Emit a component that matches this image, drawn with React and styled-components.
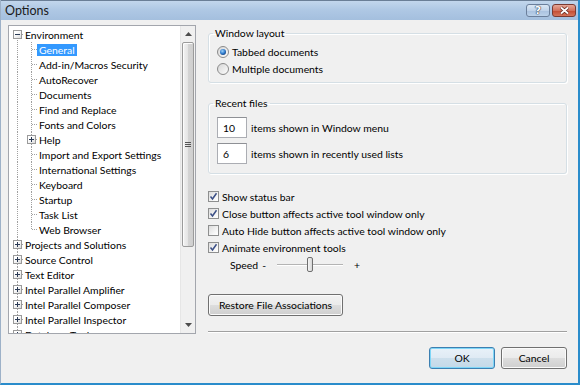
import React from 'react';
import styled, { createGlobalStyle } from 'styled-components';

const GlobalStyle = createGlobalStyle`
  html, body {
    margin: 0;
    padding: 0;
    background: #f0f0f0;
  }
  body {
    font-family: 'Lato', 'Open Sans', sans-serif;
    font-size: 10.4px;
    color: #000000;
  }
  * {
    box-sizing: border-box;
  }
`;

const TREE = [
  { label: 'Environment', level: 0, expander: 'minus' },
  { label: 'General', level: 1, selected: true },
  { label: 'Add-in/Macros Security', level: 1 },
  { label: 'AutoRecover', level: 1 },
  { label: 'Documents', level: 1 },
  { label: 'Find and Replace', level: 1 },
  { label: 'Fonts and Colors', level: 1 },
  { label: 'Help', level: 1, expander: 'plus' },
  { label: 'Import and Export Settings', level: 1 },
  { label: 'International Settings', level: 1 },
  { label: 'Keyboard', level: 1 },
  { label: 'Startup', level: 1 },
  { label: 'Task List', level: 1 },
  { label: 'Web Browser', level: 1, last: true },
  { label: 'Projects and Solutions', level: 0, expander: 'plus' },
  { label: 'Source Control', level: 0, expander: 'plus' },
  { label: 'Text Editor', level: 0, expander: 'plus' },
  { label: 'Intel Parallel Amplifier', level: 0, expander: 'plus' },
  { label: 'Intel Parallel Composer', level: 0, expander: 'plus' },
  { label: 'Intel Parallel Inspector', level: 0, expander: 'plus' },
  { label: 'Database Tools', level: 0, expander: 'plus' },
];

const CHECKS = [
  { label: 'Show status bar', checked: true },
  { label: 'Close button affects active tool window only', checked: true },
  { label: 'Auto Hide button affects active tool window only', checked: false },
  { label: 'Animate environment tools', checked: true },
];

function Expander({ type }) {
  return (
    <ExpanderBox>
      <svg width="9" height="9" viewBox="0 0 9 9">
        <path d="M2 4.5 H7" stroke="#2a3a55" strokeWidth="1" />
        {type === 'plus' && <path d="M4.5 2 V7" stroke="#2a3a55" strokeWidth="1" />}
      </svg>
    </ExpanderBox>
  );
}

function TreeRow({ item, first }) {
  return (
    <Row>
      {item.level === 1 && <Indent />}
      <Connector $first={first} $last={item.last}>
        {item.expander && <Expander type={item.expander} />}
      </Connector>
      <Label $selected={item.selected}>{item.label}</Label>
    </Row>
  );
}

function Radio({ checked }) {
  return (
    <svg width="12" height="12" viewBox="0 0 12 12">
      <defs>
        <linearGradient id="rbg" x1="0" y1="0" x2="1" y2="1">
          <stop offset="0" stopColor="#d4d4d4" />
          <stop offset="1" stopColor="#ffffff" />
        </linearGradient>
        <radialGradient id="rdot" cx="0.4" cy="0.35" r="0.7">
          <stop offset="0" stopColor="#9fd3fa" />
          <stop offset="0.6" stopColor="#2f7bcd" />
          <stop offset="1" stopColor="#173f7a" />
        </radialGradient>
      </defs>
      <circle cx="6" cy="6" r="5.5" fill="url(#rbg)" stroke="#8a8a8a" strokeWidth="1" />
      {checked && <circle cx="6" cy="6" r="3" fill="url(#rdot)" />}
    </svg>
  );
}

function Check({ checked }) {
  return (
    <CheckBox>
      {checked && (
        <svg width="9" height="9" viewBox="0 0 9 9">
          <path d="M1.5 4.5 L3.5 7 L7.5 1.2" fill="none" stroke="#3b4f86" strokeWidth="1.5" />
        </svg>
      )}
    </CheckBox>
  );
}

function ArrowUp() {
  return (
    <svg width="7" height="4" viewBox="0 0 7 4">
      <path d="M0 4 L3.5 0 L7 4 Z" fill="#4d4d4d" />
    </svg>
  );
}

function ArrowDown() {
  return (
    <svg width="7" height="4" viewBox="0 0 7 4">
      <path d="M0 0 L3.5 4 L7 0 Z" fill="#4d4d4d" />
    </svg>
  );
}

export default function App() {
  return (
    <>
      <GlobalStyle />
      <Window>
        <TitleBar>
          <Title>Options</Title>
          <CaptionButtons>
            <HelpButton>?</HelpButton>
            <CloseButton>
              <svg width="11" height="9" viewBox="0 0 11 9">
                <path d="M2 1.5 L9 7.5 M9 1.5 L2 7.5" stroke="#5a2018" strokeWidth="3.2" />
                <path d="M2 1.5 L9 7.5 M9 1.5 L2 7.5" stroke="#ffffff" strokeWidth="1.8" />
              </svg>
            </CloseButton>
          </CaptionButtons>
        </TitleBar>
        <Client>
          <Body>
            <TreeBox>
              <TreeList>
                {TREE.map((item, i) => (
                  <TreeRow key={item.label} item={item} first={i === 0} />
                ))}
              </TreeList>
              <ScrollBar>
                <ScrollButton>
                  <ArrowUp />
                </ScrollButton>
                <Track>
                  <Thumb>
                    <Grip />
                  </Thumb>
                </Track>
                <ScrollButton>
                  <ArrowDown />
                </ScrollButton>
              </ScrollBar>
            </TreeBox>

            <RightPane>
              <Group>
                <Legend>Window layout</Legend>
                <RadioList>
                  <OptionRow>
                    <Radio checked />
                    <span>Tabbed documents</span>
                  </OptionRow>
                  <OptionRow>
                    <Radio />
                    <span>Multiple documents</span>
                  </OptionRow>
                </RadioList>
              </Group>

              <Group $gap>
                <Legend>Recent files</Legend>
                <InputList>
                  <InputRow>
                    <NumberBox>10</NumberBox>
                    <span>items shown in Window menu</span>
                  </InputRow>
                  <InputRow>
                    <NumberBox>6</NumberBox>
                    <span>items shown in recently used lists</span>
                  </InputRow>
                </InputList>
              </Group>

              <CheckList>
                {CHECKS.map((c) => (
                  <CheckRow key={c.label}>
                    <Check checked={c.checked} />
                    <span>{c.label}</span>
                  </CheckRow>
                ))}
                <SpeedRow>
                  <span>Speed</span>
                  <Minus>-</Minus>
                  <Slider>
                    <SliderThumb />
                  </Slider>
                  <Plus>+</Plus>
                </SpeedRow>
              </CheckList>

              <RestoreButton>Restore File Associations</RestoreButton>

              <Separator />
            </RightPane>
          </Body>

          <Footer>
            <DialogButton $default>OK</DialogButton>
            <DialogButton>Cancel</DialogButton>
          </Footer>
        </Client>
      </Window>
    </>
  );
}

const Window = styled.div`
  width: 580px;
  height: 385px;
  display: flex;
  flex-direction: column;
  border-left: 1px solid #9db1c8;
  border-right: 2px solid #2a8ccb;
  border-bottom: 2px solid #2a8ccb;
  background: #f0f0f0;
  overflow: hidden;
`;

const TitleBar = styled.div`
  height: 20px;
  flex-shrink: 0;
  display: flex;
  align-items: center;
  justify-content: space-between;
  padding: 0 2px 0 4px;
  border-top: 1px solid #6a7e96;
  background: linear-gradient(to bottom, #c2d6ec 0%, #afc8e4 45%, #a4bfde 100%);
`;

const Title = styled.div`
  font-size: 12.5px;
  color: #1b1b1b;
  line-height: 18px;
`;

const CaptionButtons = styled.div`
  display: flex;
  gap: 2px;
  align-self: flex-start;
  margin-top: 3px;
`;

const HelpButton = styled.div`
  width: 24px;
  height: 13px;
  display: flex;
  align-items: center;
  justify-content: center;
  border: 1px solid #6b7f9b;
  border-radius: 3px;
  background: linear-gradient(to bottom, #dbe7f4 0%, #c0d3ea 50%, #a9c1df 51%, #bcd2ea 100%);
  font-family: 'DejaVu Sans', sans-serif;
  font-weight: bold;
  font-size: 11px;
  line-height: 11px;
  color: #ffffff;
  text-shadow: 0 0 1px #2d3d55, 0 0 1px #2d3d55, 0 0 1px #2d3d55;
`;

const CloseButton = styled.div`
  width: 24px;
  height: 13px;
  display: flex;
  align-items: center;
  justify-content: center;
  border: 1px solid #7a3a31;
  border-radius: 3px;
  background: linear-gradient(to bottom, #e6a898 0%, #d2715c 50%, #c24a30 51%, #d4745a 100%);
`;

const Client = styled.div`
  flex: 1;
  display: flex;
  flex-direction: column;
  padding: 5px 11px 0 7px;
`;

const Body = styled.div`
  display: flex;
  gap: 12px;
  height: 309px;
`;

const TreeBox = styled.div`
  width: 188px;
  height: 100%;
  display: flex;
  border: 1px solid #a3a6ad;
  background: #ffffff;
`;

const TreeList = styled.div`
  flex: 1;
  padding-top: 1px;
  overflow: hidden;
`;

const Row = styled.div`
  height: 15px;
  display: flex;
  align-items: stretch;
  white-space: nowrap;
`;

const dotV = 'repeating-linear-gradient(to bottom, #a0a0a0 0 1px, transparent 1px 2px)';
const dotH = 'repeating-linear-gradient(to right, #a0a0a0 0 1px, transparent 1px 2px)';

const Indent = styled.div`
  width: 14px;
  flex-shrink: 0;
  background: ${dotV} 8px 0 / 1px 100% no-repeat;
`;

const Connector = styled.div`
  width: 14px;
  flex-shrink: 0;
  display: flex;
  align-items: center;
  padding-left: 4px;
  background:
    ${dotH} 9px 7px / 5px 1px no-repeat,
    ${dotV} 8px ${(p) => (p.$first ? '7px' : '0')} / 1px ${(p) => (p.$first ? '8px' : p.$last ? '8px' : '100%')} no-repeat;
`;

const ExpanderBox = styled.div`
  width: 9px;
  height: 9px;
  display: flex;
  border: 1px solid #9a9a9a;
  background: linear-gradient(135deg, #ffffff 30%, #dcdcdc 100%);
  svg {
    margin: -1px;
  }
`;

const Label = styled.div`
  margin: 2px 0 1px;
  padding: 0 2px;
  display: flex;
  align-items: center;
  line-height: 12px;
  background: ${(p) => (p.$selected ? '#3399ff' : 'transparent')};
  color: ${(p) => (p.$selected ? '#ffffff' : '#000000')};
`;

const ScrollBar = styled.div`
  width: 15px;
  flex-shrink: 0;
  display: flex;
  flex-direction: column;
  background: #f0f0f0;
  border-left: 1px solid #e6e6e6;
`;

const ScrollButton = styled.div`
  height: 16px;
  flex-shrink: 0;
  display: flex;
  align-items: center;
  justify-content: center;
`;

const Track = styled.div`
  flex: 1;
`;

const Thumb = styled.div`
  height: 205px;
  margin: 0 1px;
  display: flex;
  align-items: center;
  justify-content: center;
  border: 1px solid #9b9b9b;
  border-radius: 2px;
  background: linear-gradient(to right, #f3f3f3 0%, #e4e4e4 50%, #d4d4d4 51%, #cfcfcf 100%);
  box-shadow: inset 1px 1px 0 #fcfcfc;
`;

const Grip = styled.div`
  width: 6px;
  height: 5px;
  border-top: 1px solid #555;
  border-bottom: 1px solid #555;
  background: linear-gradient(#555, #555) 0 1px / 6px 1px no-repeat;
`;

const RightPane = styled.div`
  width: 359px;
  height: 100%;
  display: flex;
  flex-direction: column;
  padding-top: 1px;
`;

const Group = styled.fieldset`
  margin: ${(p) => (p.$gap ? '13px' : '0')} 0 0;
  padding: 0 6px 0 8px;
  border: 1px solid #d5dfe5;
  border-radius: 3px;
  box-shadow: inset 1px 1px 0 #ffffff, 1px 1px 0 #ffffff;
  min-width: 0;
`;

const Legend = styled.legend`
  margin-left: -4px;
  padding: 0 2px;
  line-height: 15px;
`;

const RadioList = styled.div`
  display: flex;
  flex-direction: column;
  gap: 2px;
  padding: 3px 0 6px;
`;

const OptionRow = styled.div`
  height: 15px;
  display: flex;
  align-items: center;
  gap: 3px;
`;

const InputList = styled.div`
  display: flex;
  flex-direction: column;
  gap: 5px;
  padding: 6px 0 9px;
`;

const InputRow = styled.div`
  display: flex;
  align-items: center;
  gap: 4px;
`;

const NumberBox = styled.div`
  width: 30px;
  height: 21px;
  display: flex;
  align-items: center;
  padding-left: 5px;
  border: 1px solid #abadb3;
  border-top-color: #8e9095;
  background: #ffffff;
`;

const CheckList = styled.div`
  display: flex;
  flex-direction: column;
  margin-top: 14px;
`;

const CheckRow = styled.div`
  height: 17px;
  display: flex;
  align-items: center;
  gap: 3px;
`;

const CheckBox = styled.div`
  width: 11px;
  height: 11px;
  display: flex;
  align-items: center;
  justify-content: center;
  border: 1px solid #8e8f8f;
  background: linear-gradient(135deg, #dcdcdc 0%, #f7f7f7 70%, #ffffff 100%);
`;

const SpeedRow = styled.div`
  height: 17px;
  display: flex;
  align-items: center;
  padding-left: 22px;
`;

const Minus = styled.span`
  margin-left: 4px;
`;

const Slider = styled.div`
  width: 66px;
  height: 15px;
  margin-left: 11px;
  display: flex;
  align-items: center;
  justify-content: center;
  padding-right: 2px;
  background: linear-gradient(to bottom, #b4b4b4, #b4b4b4) 0 7px / 100% 1px no-repeat,
    linear-gradient(to bottom, #ffffff, #ffffff) 0 8px / 100% 1px no-repeat;
`;

const SliderThumb = styled.div`
  width: 6px;
  height: 15px;
  margin-left: 2px;
  border: 1px solid #6f6f6f;
  border-radius: 2px;
  background: linear-gradient(to right, #f6f6f6, #d6d6d6);
`;

const Plus = styled.span`
  margin-left: 11px;
`;

const buttonFace = `
  border: 1px solid #707070;
  border-radius: 3px;
  background: linear-gradient(to bottom, #f2f2f2 0%, #ebebeb 50%, #dddddd 51%, #cfcfcf 100%);
  box-shadow: inset 0 0 0 1px #fbfbfb;
  display: flex;
  align-items: center;
  justify-content: center;
  font-family: 'Lato', 'Open Sans', sans-serif;
  font-size: 10.4px;
  color: #000000;
`;

const RestoreButton = styled.div`
  ${buttonFace}
  width: 135px;
  height: 22px;
  margin-top: 21px;
`;

const Separator = styled.div`
  margin-top: auto;
  margin-bottom: 1px;
  border-top: 1px solid #a0a0a0;
  border-bottom: 1px solid #ffffff;
`;

const Footer = styled.div`
  display: flex;
  justify-content: flex-end;
  gap: 6px;
  margin-top: 13px;
`;

const DialogButton = styled.div`
  ${buttonFace}
  width: 66px;
  height: 22px;
  ${(p) =>
    p.$default &&
    `
    border-color: #3c7fb1;
    background: linear-gradient(to bottom, #e8f1f9 0%, #dfeaf4 50%, #cddfec 51%, #c4d9e8 100%);
    box-shadow: inset 0 0 0 1px #7fd6f7;
  `}
`;
